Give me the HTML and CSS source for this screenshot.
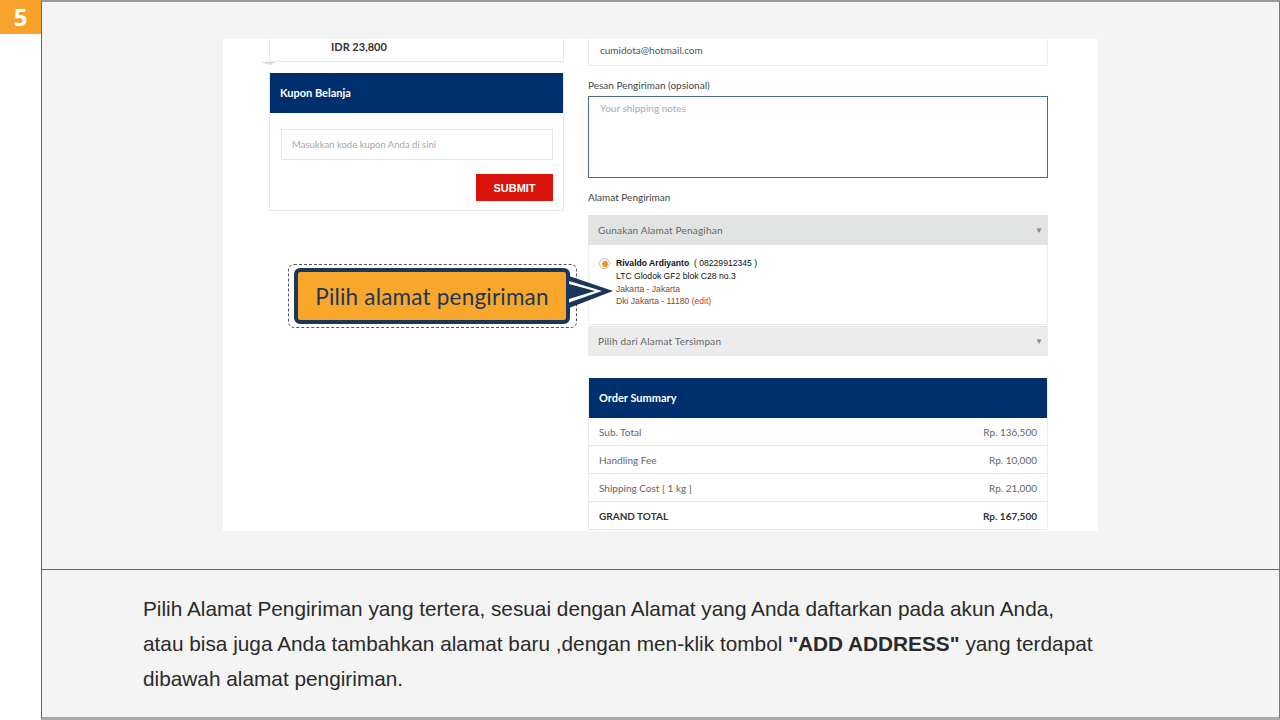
FILE: index.html
```html
<!DOCTYPE html>
<html lang="en">
<head>
    <meta charset="UTF-8">
    <meta name="viewport" content="width=device-width, initial-scale=1.0">
    <title>Langkah 5 - Alamat Pengiriman</title>
    <link rel="stylesheet" href="styles.css">
</head>
<body>

    <div class="step-badge">5</div>

    <div class="frame">
        <div class="stage">
            <div class="shot">

                <div class="col-left">
                    <div class="price-card">IDR 23,800</div>

                    <div class="coupon-card">
                        <div class="card-head">Kupon Belanja</div>
                        <div class="coupon-body">
                            <div class="coupon-input">Masukkan kode kupon Anda di sini</div>
                            <div class="coupon-actions">
                                <button class="btn-submit">SUBMIT</button>
                            </div>
                        </div>
                    </div>
                </div>

                <div class="col-right">
                    <div class="email-box">cumidota@hotmail.com</div>

                    <div class="field-label label-notes">Pesan Pengiriman (opsional)</div>
                    <div class="notes-box">Your shipping notes</div>

                    <div class="field-label label-address">Alamat Pengiriman</div>
                    <div class="select-bar select-billing">
                        <span>Gunakan Alamat Penagihan</span>
                        <span class="caret">&#9660;</span>
                    </div>
                    <div class="address-box">
                        <span class="radio"><span></span></span>
                        <div class="address-lines">
                            <div><b>Rivaldo Ardiyanto</b> &nbsp;( 08229912345 )</div>
                            <div>LTC Glodok GF2 blok C28 no.3</div>
                            <div class="muted">Jakarta - Jakarta</div>
                            <div class="muted">Dki Jakarta - 11180 <span class="edit">(edit)</span></div>
                        </div>
                    </div>
                    <div class="select-bar select-saved">
                        <span>Pilih dari Alamat Tersimpan</span>
                        <span class="caret">&#9660;</span>
                    </div>

                    <div class="summary">
                        <div class="card-head">Order Summary</div>
                        <div class="summary-row"><span>Sub. Total</span><span>Rp. 136,500</span></div>
                        <div class="summary-row"><span>Handling Fee</span><span>Rp. 10,000</span></div>
                        <div class="summary-row"><span>Shipping Cost [ 1 kg ]</span><span>Rp. 21,000</span></div>
                        <div class="summary-row total"><span>GRAND TOTAL</span><span>Rp. 167,500</span></div>
                    </div>
                </div>

                <!-- annotation over the screenshot -->
                <div class="callout">
                    <div class="callout-inner">Pilih alamat pengiriman</div>
                    <svg class="callout-arrow" width="46" height="40" viewBox="0 0 46 40">
                        <polygon points="0,4 44,19 0,36" fill="#1b365d"/>
                        <polygon points="0,9 33,19 0,30.5" fill="#ffffff"/>
                        <polygon points="0,12 26,19 0,27" fill="#1b365d"/>
                    </svg>
                </div>

            </div>
        </div>

        <div class="caption">
            <p>Pilih Alamat Pengiriman yang tertera, sesuai dengan Alamat yang Anda daftarkan pada akun Anda,</p>
            <p>atau bisa juga Anda tambahkan alamat baru ,dengan men-klik tombol <b>"ADD ADDRESS"</b> yang terdapat</p>
            <p>dibawah alamat pengiriman.</p>
        </div>
    </div>

</body>
</html>
```

FILE: styles.css
```css
* {
    margin: 0;
    padding: 0;
    box-sizing: border-box;
}

body {
    background-color: #ffffff;
    font-family: "Liberation Sans", Arial, sans-serif;
    width: 1280px;
    height: 720px;
    overflow: hidden;
    position: relative;
}

/* Step number */
.step-badge {
    position: absolute;
    left: 0;
    top: 0;
    width: 41px;
    height: 34px;
    background-color: #f8a42c;
    color: white;
    font-family: "Open Sans", sans-serif;
    font-weight: 700;
    font-size: 24px;
    line-height: 34px;
    text-align: center;
}

.frame {
    margin-left: 41px;
    width: 1239px;
    height: 720px;
    background-color: #f4f4f4;
    border-top: 2px solid #9a9a9a;
    border-left: 1px solid #666;
    border-right: 1px solid #777;
    border-bottom: 3px solid #aaa;
    display: flex;
    flex-direction: column;
}

.stage {
    height: 568px;
    border-bottom: 1px solid #666;
    padding: 37px 0 0 181px;
}

/* Screenshot */
.shot {
    position: relative;
    width: 875px;
    height: 492px;
    background-color: #ffffff;
    overflow: hidden;
    display: flex;
    gap: 24px;
    padding-left: 46px;
    font-family: Lato, "Open Sans", sans-serif;
    font-size: 10px;
    color: #444;
}

.col-left {
    width: 295px;
}

.col-right {
    width: 460px;
}

.price-card {
    position: relative;
    height: 23px;
    border: 1px solid #e8e8e8;
    border-top: none;
    padding-left: 61px;
    font-size: 11px;
    font-weight: 700;
    color: #333;
    line-height: 16px;
}

.price-card::after {
    content: "";
    position: absolute;
    left: -10px;
    bottom: -4px;
    width: 0;
    height: 0;
    border-top: 3px solid #d8dadc;
    border-left: 10px solid transparent;
    border-right: 6px solid transparent;
}

.coupon-card {
    margin-top: 11px;
    border: 1px solid #e8e8e8;
    border-top: none;
}

.card-head {
    height: 40px;
    background-color: #002f6e;
    color: white;
    font-weight: 700;
    font-size: 11px;
    line-height: 40px;
    padding-left: 10px;
}

.coupon-body {
    padding: 16px 10px 9px 11px;
}

.coupon-input {
    height: 31px;
    border: 1px solid #e6e6e6;
    line-height: 30px;
    padding-left: 10px;
    color: #a8a8a8;
    font-size: 9.5px;
}

.coupon-actions {
    display: flex;
    justify-content: flex-end;
    margin-top: 14px;
}

.btn-submit {
    width: 77px;
    height: 27px;
    background-color: #d9120a;
    border: none;
    color: white;
    font-family: "Liberation Sans", Arial, sans-serif;
    font-weight: 700;
    font-size: 11px;
}

/* Right column form */
.email-box {
    height: 27px;
    border: 1px solid #ececec;
    border-top: none;
    padding-left: 11px;
    line-height: 22px;
    color: #555;
}

.field-label {
    color: #444;
    line-height: 12px;
}

.label-notes {
    margin-top: 13px;
}

.notes-box {
    margin-top: 5px;
    height: 82px;
    border: 1px solid #4a68a4;
    padding: 5px 11px;
    color: #aaa;
}

.label-address {
    margin-top: 13px;
}

.select-bar {
    height: 30px;
    display: flex;
    justify-content: space-between;
    align-items: center;
    padding: 0 5px 0 10px;
    color: #666;
    letter-spacing: 0.2px;
}

.select-billing {
    margin-top: 12px;
    background-color: #e2e3e3;
}

.select-saved {
    margin-top: 1px;
    background-color: #ececec;
}

.caret {
    font-size: 8px;
    color: #888;
}

.address-box {
    height: 80px;
    border: 1px solid #eeeeee;
    border-top: none;
    display: flex;
    gap: 6px;
    padding: 12px 0 0 10px;
    font-family: "Liberation Sans", Arial, sans-serif;
    font-size: 8.6px;
    color: #111;
}

.radio {
    width: 11px;
    height: 11px;
    margin-top: 1px;
    border: 1px solid #bdbdbd;
    border-radius: 50%;
    display: flex;
    align-items: center;
    justify-content: center;
    flex-shrink: 0;
}

.radio span {
    width: 6px;
    height: 6px;
    border-radius: 50%;
    background-color: #f7941d;
}

.address-lines {
    line-height: 12.8px;
}

.address-lines .muted {
    color: #7c4a36;
}

.edit {
    color: #e0302a;
}

/* Order summary */
.summary {
    margin-top: 22px;
    border-right: 1px solid #ececec;
    border-left: 1px solid #ececec;
}

.summary-row {
    height: 28px;
    display: flex;
    justify-content: space-between;
    align-items: center;
    padding: 0 10px 0 10px;
    border-bottom: 1px solid #e6e6e6;
    color: #666;
}

.summary-row.total {
    font-weight: 700;
    color: #333;
}

/* Callout */
.callout {
    position: absolute;
    left: 65px;
    top: 225px;
    width: 289px;
    height: 64px;
    border: 1px dashed #555;
    border-radius: 6px;
    padding: 3px 6px 3px 5px;
}

.callout-inner {
    height: 100%;
    background-color: #f9a72b;
    border: 4px solid #1b365d;
    border-radius: 6px;
    display: flex;
    align-items: center;
    justify-content: center;
    font-family: Lato, "Open Sans", sans-serif;
    font-size: 22.5px;
    color: #1b365d;
    letter-spacing: 0.2px;
}

.callout-arrow {
    position: absolute;
    left: 280px;
    top: 7px;
}

/* Caption */
.caption {
    flex: 1;
    padding: 21px 0 0 101px;
    font-size: 20.8px;
    line-height: 35px;
    color: #2a2a2a;
}
```
